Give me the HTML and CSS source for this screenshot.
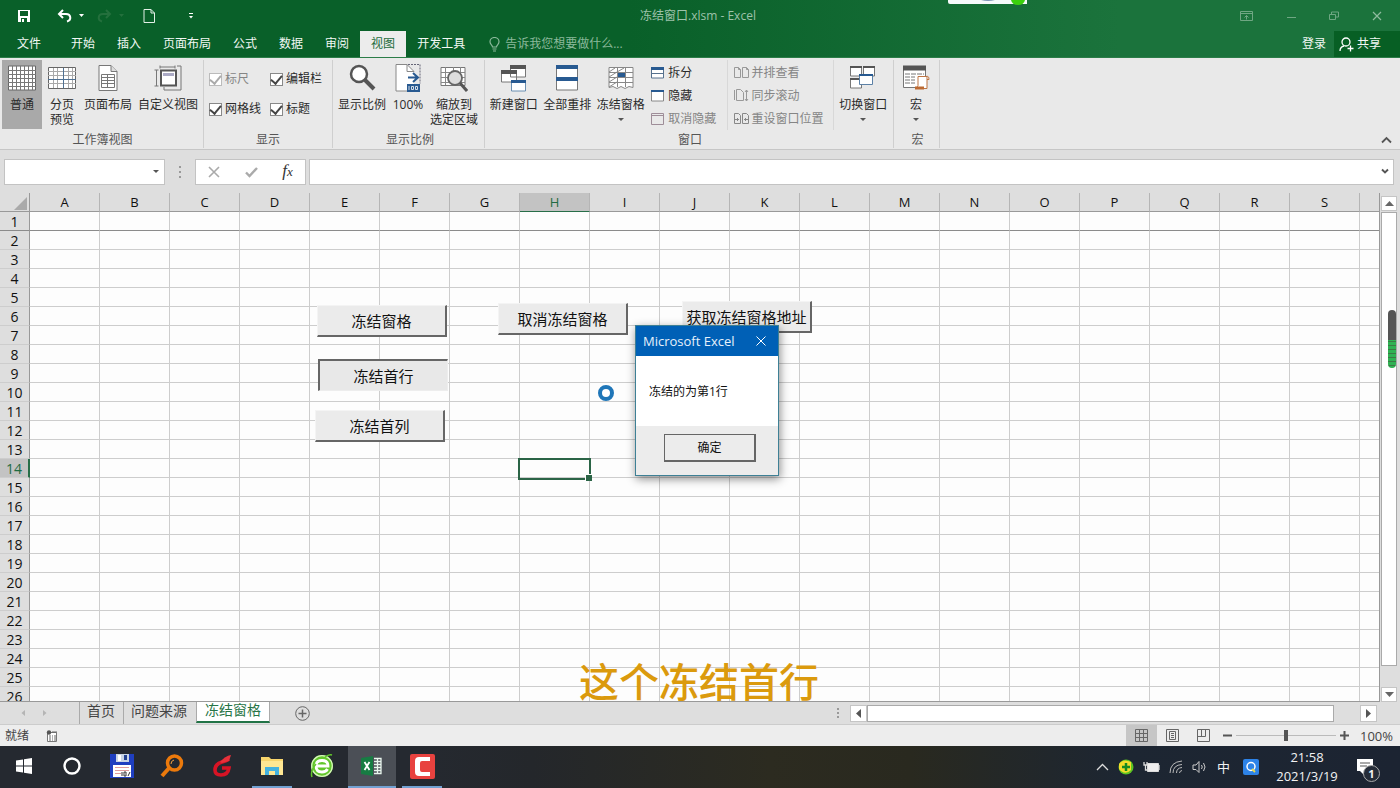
FILE: index.html
```html
<!DOCTYPE html>
<html lang="zh-CN">
<head>
<meta charset="utf-8">
<title>冻结窗口.xlsm - Excel</title>
<link rel="stylesheet" href="styles.css">
</head>
<body>
<div class="app">
  <header class="titlebar">
    <div class="quick">
      <button class="qbtn" aria-label="保存"><svg width="14" height="14" viewBox="0 0 14 14"><path d="M1 1h12v12H1z" fill="#fff"/><path d="M3 2h8v5H3zM4 9h6v4H4z" fill="#0b6029"/><path d="M5 10h2v3H5z" fill="#fff"/></svg></button>
      <button class="qbtn" aria-label="撤消"><svg width="28" height="14" viewBox="0 0 28 14"><path d="M6 1L2 5l4 4M2.500 5H9c5 0 6 6 1 7.500" fill="none" stroke="#fff" stroke-width="2"/><path d="M22 5h5l-2.500 3z" fill="#fff"/></svg></button>
      <button class="qbtn" aria-label="恢复"><svg width="28" height="14" viewBox="0 0 28 14"><path d="M9 1l4 4-4 4M12.500 5H6C1 5 0 11 5 12.500" fill="none" stroke="#24703d" stroke-width="2"/><path d="M22 5h5l-2.500 3z" fill="#24703d"/></svg></button>
      <button class="qbtn" aria-label="新建"><svg width="14" height="14" viewBox="0 0 14 14"><path d="M2 .5h7l3.500 3.500v9.500H2zM9 .5V4h3.500" fill="none" stroke="#e3f0e7"/></svg></button>
      <button class="qbtn" aria-label="自定义快速访问工具栏"><svg width="6" height="8" viewBox="0 0 6 8"><path d="M1 1.500h4" stroke="#fff"/><path d="M1 4h4L3 6.500z" fill="#fff"/></svg></button>
    </div>
    <h1 class="doc-title">冻结窗口.xlsm - Excel</h1>
    <div class="window-buttons">
      <button aria-label="功能区显示选项"><svg width="13" height="12" viewBox="0 0 13 12"><path d="M.5 1.500h12v9H.5zM.5 3.500h12M6.500 9.500V5.500M4.500 7.500l2-2 2 2" fill="none" stroke="#6fa783"/></svg></button>
      <button aria-label="最小化"><svg width="10" height="12" viewBox="0 0 10 12"><path d="M1 7.500h9" stroke="#6fa783"/></svg></button>
      <button aria-label="还原"><svg width="10" height="12" viewBox="0 0 10 12"><path d="M.5 4.500h6v5h-6zM2.500 4.500v-2.500h7v5h-3" fill="none" stroke="#6fa783"/></svg></button>
      <button aria-label="关闭"><svg width="10" height="12" viewBox="0 0 10 12"><path d="M1 2l8 8M9 2l-8 8" stroke="#8fbb9e" stroke-width="1.200"/></svg></button>
    </div>
    <div class="float-bar"><svg width="79" height="5" viewBox="0 0 79 5"><path d="M0 0h79v4H2Q0 4 0 2z" fill="#f6fafb"/><path d="M33 0h14q-7 2-14 0" fill="#7d93b5"/><path d="M63 0h14q-1 5-7 5t-7-5" fill="#3bd00d"/></svg></div>
  </header>

  <nav class="tabs">
    <button class="tab file">文件</button>
    <button class="tab">开始</button>
    <button class="tab">插入</button>
    <button class="tab">页面布局</button>
    <button class="tab">公式</button>
    <button class="tab">数据</button>
    <button class="tab">审阅</button>
    <button class="tab active">视图</button>
    <button class="tab">开发工具</button>
    <label class="tell"><svg width="11" height="15" viewBox="0 0 11 15"><path d="M3.500 10C3.500 8 1 7.500 1 4.800a4.500 4.300 0 0 1 9 0C10 7.500 7.500 8 7.500 10zM3.500 12h4M4 14h3" fill="none" stroke="#8bb99b" stroke-width="1.200"/></svg><input type="text" placeholder="告诉我您想要做什么..." aria-label="告诉我您想要做什么"></label>
    <button class="login">登录</button>
    <button class="share"><svg width="15" height="15" viewBox="0 0 15 15"><circle cx="7" cy="5" r="4" fill="none" stroke="#fff" stroke-width="1.300"/><path d="M1 14c0-3 2-4.500 4-5M8.500 11.500h6M11.500 8.500v6" fill="none" stroke="#fff" stroke-width="1.300"/></svg>共享</button>
  </nav>

  <section class="ribbon">
    <div class="group g-views">
      <div class="tools">
        <button class="big w40 pressed"><svg width="28" height="26" viewBox="0 0 28 26"><path d="M.5 1h27v24H.5z" fill="#fff" stroke="#666"/><path d="M0 5.500h28M0 9.500h28M0 13.500h28M0 17.500h28M0 21.500h28M4.500 1v24M8.500 1v24M12.500 1v24M16.500 1v24M20.500 1v24M24.500 1v24" stroke="#777"/></svg>普通</button>
        <button class="big w40"><svg width="28" height="26" viewBox="0 0 28 26"><path d="M.5 2.500h27v21H.5z" fill="#fff" stroke="#666"/><path d="M0 6.500h28M0 10.500h28M0 18.500h28M5.500 3v20M9.500 3v20M20.500 3v20M24.500 3v20" stroke="#a9a9a9"/><path d="M0 14.500h28M15.500 3v20" stroke="#4e7092"/></svg>分页<br>预览</button>
        <button class="big w52"><svg width="20" height="26" viewBox="0 0 20 26"><path d="M1 .5h12l6 6v19H1z" fill="#fff" stroke="#777"/><path d="M13 .5v6h6" fill="#ddd" stroke="#777"/><path d="M3.500 9.500h13v13h-13zM3.500 12.500h13M3.500 15.500h13M3.500 18.500h13M9.500 9.500v13" fill="none" stroke="#777"/></svg>页面布局</button>
        <button class="big w72"><svg width="28" height="26" viewBox="0 0 28 26"><path d="M6 .5v3M6 2h15M21 .5v3M.5 5h4M2.500 5v16M.5 21h4M23 1h4v24H10v-3" fill="none" stroke="#777"/><path d="M7 5.500h15v15H7z" fill="#fff" stroke="#555" stroke-width="2"/><path d="M9 8h11v3H9z" fill="#aaa9c4"/></svg>自定义视图</button>
      </div>
      <div class="group-name">工作簿视图</div>
    </div>
    <div class="group g-show">
      <div class="checks">
        <label class="dim"><input type="checkbox" checked disabled>标尺</label>
        <label><input type="checkbox" checked>编辑栏</label>
        <label><input type="checkbox" checked>网格线</label>
        <label><input type="checkbox" checked>标题</label>
      </div>
      <div class="group-name">显示</div>
    </div>
    <div class="group g-zoom">
      <div class="tools">
        <button class="big w52"><svg width="28" height="28" viewBox="0 0 28 28"><circle cx="11" cy="10" r="8" fill="#fff" stroke="#555" stroke-width="2.500"/><path d="M17 16l9 9" stroke="#555" stroke-width="4"/></svg>显示比例</button>
        <button class="big w40"><svg width="26" height="28" viewBox="0 0 26 28"><path d="M1 .5h11l7 7V27H1z" fill="#fff"/><path d="M12 27H1V.5h11l7 7h-7v-7" fill="none" stroke="#888"/><path d="M13 .5h12v19" fill="none" stroke="#667" stroke-dasharray="2 1"/><path d="M13 13.500h9M18 9l5 4.500-5 4.500" fill="none" stroke="#285a91" stroke-width="2"/><path d="M12 20h13v8H12z" fill="#285a91"/><path d="M14 22v4M16.500 22.500h2v3h-2zM20.500 22.500h2v3h-2z" fill="none" stroke="#fff" stroke-width=".8"/></svg>100%</button>
        <button class="big w52"><svg width="28" height="28" viewBox="0 0 28 28"><path d="M1 3.500h24v18H1z" fill="#fff" stroke="#777"/><path d="M1 8.500h24M1 13.500h24M1 18.500h24M5.500 3v18M13.500 3v18M20.500 3v18" stroke="#888"/><circle cx="15" cy="14" r="7" fill="#ddd" stroke="#666" stroke-width="1.800"/><path d="M20 19l7 8" stroke="#555" stroke-width="3"/></svg>缩放到<br>选定区域</button>
      </div>
      <div class="group-name">显示比例</div>
    </div>
    <div class="group g-window">
      <div class="tools">
        <button class="big w54"><svg width="28" height="28" viewBox="0 0 28 28"><path d="M10.500 2h15v11h-15zM1.500 7h15v11h-15z" fill="#fff" stroke="#777"/><path d="M10 1h16v4H10zM1 6h16v4H1z" fill="#555"/><path d="M11.500 17h14v10h-14z" fill="#fff" stroke="#6b8fb1"/><path d="M11 16h15v3H11z" fill="#285a91"/></svg>新建窗口</button>
        <button class="big w54"><svg width="24" height="28" viewBox="0 0 24 28"><path d="M1.500 2h21v24h-21z" fill="#fff" stroke="#777"/><path d="M1 1h22v4H1zM1 13h22v4H1z" fill="#285a91"/></svg>全部重排</button>
        <button class="big w54"><svg width="26" height="28" viewBox="0 0 26 28"><path d="M1 3.500h24v20l-4-1-4 2-4-2-4 2-4-2-4 1z" fill="#fff" stroke="#888"/><path d="M1 8.500h24M1 13.500h24M1 18.500h24M9.500 3v20M17.500 3v20M1 8l6-4M9 8l7-4M1 18l8-5M1 23l8-5M1 13l8-5" fill="none" stroke="#888"/><path d="M10 9h7v4h-7z" fill="#285a91"/></svg>冻结窗格<i class="caret"></i></button>
        <div class="stack first">
          <button><svg width="13" height="12" viewBox="0 0 13 12"><path d="M.5 1h12v10H.5zM.5 6.500h12" fill="#fff" stroke="#56718e"/><path d="M0 0h13v3H0z" fill="#285a91"/></svg>拆分</button>
          <button><svg width="13" height="12" viewBox="0 0 13 12"><path d="M.5 1h12v10H.5z" fill="#fff" stroke="#888"/><path d="M0 0h13v2H0z" fill="#285a91"/></svg>隐藏</button>
          <button class="dim"><svg width="13" height="12" viewBox="0 0 13 12"><path d="M.5 .5h12v11H.5zM.5 2.500h12" fill="none" stroke="#9e8d98"/></svg>取消隐藏</button>
        </div>
        <div class="stack second">
          <button class="dim"><svg width="15" height="12" viewBox="0 0 15 12"><path d="M.5 .5h4l2 2v8h-6zM8.500 .5h4l2 2v8h-6zM4.500 .5v2h2M12.500 .5v2h2" fill="none" stroke="#999"/></svg>并排查看</button>
          <button class="dim"><svg width="15" height="13" viewBox="0 0 15 13"><path d="M.5 1v10M2.500 11.500V.5h4l3 3v8zM12.500 1v11M11 3l1.500-2L14 3M11 10l1.500 2 1.500-2" fill="none" stroke="#999"/></svg>同步滚动</button>
          <button class="dim"><svg width="15" height="12" viewBox="0 0 15 12"><path d="M.5 .5h4l2 2v8h-6zM8.500 .5h4l2 2v8h-6zM1 6.500h4M3.500 5v3M10 6.500h4M11.500 5v3" fill="none" stroke="#888"/></svg>重设窗口位置</button>
        </div>
        <button class="big w60"><svg width="28" height="26" viewBox="0 0 28 26"><path d="M1.500 2h11v9h-11zM14.500 2h11v9h-11zM1.500 14h11v9h-11z" fill="#fff" stroke="#777"/><path d="M1 1h12v2H1zM14 1h12v2H14zM1 13h12v2H1z" fill="#555"/><path d="M10.500 9.500h13v10h-13z" fill="#fff" stroke="#5c81a6"/><path d="M10 9h14v2H10z" fill="#285a91"/></svg>切换窗口<i class="caret"></i></button>
      </div>
      <div class="group-name">窗口</div>
    </div>
    <div class="group g-macro">
      <div class="tools">
        <button class="big w40"><svg width="28" height="27" viewBox="0 0 28 27"><path d="M1.500 2h22v21h-22z" fill="#fff" stroke="#777"/><path d="M1 1h23v5H1z" fill="#555"/><path d="M3 9.500h19M3 12.500h10M3 15.500h10M3 18.500h10" stroke="#777" stroke-dasharray="5 1"/><path d="M16 12h9v12H14l2-3zM24 12q3-1 3 3h-2" fill="#fff" stroke="#bd7544"/><path d="M13 22h9v3h-9z" fill="#bd6a32"/></svg>宏<i class="caret"></i></button>
      </div>
      <div class="group-name">宏</div>
    </div>
    <button class="collapse" aria-label="折叠功能区"><svg width="11" height="8" viewBox="0 0 11 8"><path d="M1 6.500l4.500-4.500L10 6.500" fill="none" stroke="#555" stroke-width="1.800"/></svg></button>
  </section>

  <section class="formula">
    <div class="namebox"><input type="text" aria-label="名称框"><i class="caret"></i></div>
    <svg class="dots" width="4" height="14" viewBox="0 0 4 14"><path d="M1 1h2v2H1zM1 6h2v2H1zM1 11h2v2H1z" fill="#999"/></svg>
    <div class="fx">
      <button aria-label="取消"><svg width="12" height="12" viewBox="0 0 12 12"><path d="M1 1l10 10M11 1L1 11" stroke="#aaa" stroke-width="1.600"/></svg></button>
      <button aria-label="输入"><svg width="13" height="12" viewBox="0 0 13 12"><path d="M1 6.500L4.500 10 12 2" fill="none" stroke="#aaa" stroke-width="2.400"/></svg></button>
      <button class="fx-btn" aria-label="插入函数">f<small>x</small></button>
    </div>
    <div class="bar"><input type="text" aria-label="编辑栏"><svg width="8" height="7" viewBox="0 0 8 7"><path d="M1 1.500L4 4.500l3-3" fill="none" stroke="#555" stroke-width="1.900"/></svg></div>
  </section>

  <main class="sheet">
    <div class="grid">
      <table>
        <thead><tr id="cols"><th class="corner"><svg width="13" height="13" viewBox="0 0 13 13"><path d="M13 0v13H0z" fill="#aaa"/></svg></th></tr></thead>
        <tbody id="rows"></tbody>
      </table>
      <div class="cell-cursor"></div>
      <button class="form-btn f1">冻结窗格</button>
      <button class="form-btn f2">取消冻结窗格</button>
      <button class="form-btn f3">获取冻结窗格地址</button>
      <button class="form-btn f4 down">冻结首行</button>
      <button class="form-btn f5">冻结首列</button>
      <div class="busy"></div>
    </div>
    <div class="vscroll">
      <button aria-label="向上滚动"><svg width="9" height="5" viewBox="0 0 9 5"><path d="M0 5h9L4.500 0z" fill="#666"/></svg></button>
      <div class="vthumb"></div>
      <button aria-label="向下滚动"><svg width="9" height="5" viewBox="0 0 9 5"><path d="M0 0h9L4.500 5z" fill="#666"/></svg></button>
      <div class="meter"></div>
    </div>
    <div class="dialog" role="dialog" aria-label="Microsoft Excel">
      <div class="dlg-title"><span>Microsoft Excel</span><button aria-label="关闭"><svg width="10" height="10" viewBox="0 0 10 10"><path d="M.5 .5l9 9M9.500 .5l-9 9" stroke="#fff"/></svg></button></div>
      <p>冻结的为第1行</p>
      <div class="dlg-foot"><button>确定</button></div>
    </div>
  </main>
  <div class="subtitle">这个冻结首行</div>

  <div class="sheet-tabs">
    <div class="nav-arrows"><svg width="28" height="8" viewBox="0 0 28 8"><path d="M5 1v6L1.500 4zM23 1v6l3.500-3z" fill="#b5b5b5"/></svg></div>
    <button class="stab">首页</button>
    <button class="stab">问题来源</button>
    <button class="stab active">冻结窗格</button>
    <button class="add" aria-label="新工作表"><svg width="15" height="15" viewBox="0 0 15 15"><circle cx="7.500" cy="7.500" r="6.800" fill="none" stroke="#666"/><path d="M3.500 7.500h8M7.500 3.500v8" stroke="#666" stroke-width="1.500"/></svg></button>
    <svg class="dots tab-dots" width="4" height="12" viewBox="0 0 4 12"><path d="M1 1h2v2H1zM1 5h2v2H1zM1 9h2v2H1z" fill="#999"/></svg>
    <div class="hscroll">
      <button aria-label="向左滚动"><svg width="5" height="9" viewBox="0 0 5 9"><path d="M5 0v9L0 4.500z" fill="#555"/></svg></button>
      <div class="hthumb"></div>
      <button aria-label="向右滚动"><svg width="5" height="9" viewBox="0 0 5 9"><path d="M0 0v9l5-4.500z" fill="#555"/></svg></button>
    </div>
  </div>

  <footer class="status">
    <span class="ready">就绪</span>
    <svg width="12" height="12" viewBox="0 0 12 12"><path d="M1.500 2.500h9v9h-9z" fill="#fff" stroke="#777"/><circle cx="3" cy="2.500" r="2.200" fill="#555"/><path d="M6 2h5M3 6h2M6 6h1M8 6h2M3 8h2M6 8h1M8 8h2M3 10h2M6 10h1M8 10h2" stroke="#666"/></svg>
    <div class="status-right">
      <button class="view on" aria-label="普通"><svg width="13" height="13" viewBox="0 0 13 13"><path d="M.5 .5h12v12H.5zM.5 4.500h12M.5 8.500h12M4.500 .5v12M8.500 .5v12" fill="none" stroke="#666"/></svg></button>
      <button class="view" aria-label="页面布局"><svg width="13" height="13" viewBox="0 0 13 13"><path d="M.5 .5h12v12H.5zM3.500 2.500h6v8h-6zM5 4.500h3M5 6.500h3M5 8.500h3" fill="none" stroke="#666"/></svg></button>
      <button class="view" aria-label="分页预览"><svg width="13" height="13" viewBox="0 0 13 13"><path d="M.5 .5h12v12H.5zM4.500 .5v7M8.500 .5v7h-8" fill="none" stroke="#666"/></svg></button>
      <button class="zoom" aria-label="缩小"><svg width="9" height="9" viewBox="0 0 9 9"><path d="M0 4.500h9" stroke="#555" stroke-width="2"/></svg></button>
      <input type="range" min="0" max="100" value="50" aria-label="显示比例">
      <button class="zoom" aria-label="放大"><svg width="9" height="9" viewBox="0 0 9 9"><path d="M0 4.500h9M4.500 0v9" stroke="#555" stroke-width="2"/></svg></button>
      <span class="percent">100%</span>
    </div>
  </footer>

  <footer class="taskbar">
    <button class="task" aria-label="开始"><svg width="16" height="16" viewBox="0 0 16 16"><path d="M0 2.500l7-1v6H0zM8 1.300L16 0v7.500H8zM0 8.500h7v6l-7-1zM8 8.500h8V16l-8-1.300z" fill="#fff"/></svg></button>
    <button class="task" aria-label="搜索"><svg width="18" height="18" viewBox="0 0 18 18"><circle cx="9" cy="9" r="7.500" fill="none" stroke="#fff" stroke-width="2.400"/></svg></button>
    <button class="task" aria-label="磁盘工具"><svg width="24" height="24" viewBox="0 0 24 24"><path d="M0 0h24v24H0z" fill="#1f3fc0"/><path d="M6 0h13v8H6z" fill="#c9d4e4"/><path d="M8 1h3v6H8z" fill="#fff"/><path d="M14 1h3v5h-3z" fill="#23418f"/><path d="M3 11h18v12H3z" fill="#fff"/><path d="M5 13.500h14M5 16.500h14" stroke="#e09c9c"/><path d="M5 19.500h6" stroke="#e09c9c"/><path d="M12 18v4M14 18h2v4h-2zM18 22l2-4" fill="none" stroke="#333"/></svg></button>
    <button class="task" aria-label="查找"><svg width="24" height="24" viewBox="0 0 24 24"><circle cx="14.500" cy="9" r="7" fill="none" stroke="#ec7a0c" stroke-width="3.500"/><path d="M10 13l-8 9" stroke="#ec7a0c" stroke-width="4"/><path d="M11 10a4 4 0 0 1 3-4" fill="none" stroke="#f9a342"/></svg></button>
    <button class="task" aria-label="浏览工具"><svg width="22" height="24" viewBox="0 0 22 24"><path d="M18 5q-3 2-7 3-7 2-7 8 0 5 6 5 7 0 8-7h-7" fill="none" stroke="#d71425" stroke-width="3.600"/><path d="M20 1l-2 6-7 2-2-1q5-6 11-7z" fill="#e8303a"/></svg></button>
    <button class="task run" aria-label="文件资源管理器"><svg width="24" height="22" viewBox="0 0 24 22"><path d="M1 2h8l2 2h12v16H1z" fill="#f8d56c"/><path d="M1 6h22v14H1z" fill="#ffe793"/><path d="M5 20v-8h14v8h-4v-4H9v4z" fill="#45b2df"/></svg></button>
    <button class="task" aria-label="浏览器"><svg width="24" height="24" viewBox="0 0 24 24"><circle cx="12" cy="12" r="11" fill="#62c72b"/><circle cx="12" cy="12" r="10.300" fill="none" stroke="#d7f4bd" stroke-width="1.300"/><path d="M6 12h12q0-5.500-6-5.500T6 12q0 6 6 6 4 0 5.500-3" fill="none" stroke="#fff" stroke-width="2.800"/><path d="M2 23q-2-6 4-13M15 3q4-3 7-2" fill="none" stroke="#62c72b" stroke-width="1.500"/></svg></button>
    <button class="task run current" aria-label="Excel"><svg width="22" height="20" viewBox="0 0 22 20"><path d="M0 2l12-2v20L0 18z" fill="#177c43"/><path d="M3.500 6l5 8M8.500 6l-5 8" stroke="#fff" stroke-width="1.800"/><path d="M13 2.500h7v15h-7M13 5.500h7M13 8.500h7M13 11.500h7M13 14.500h7M16.500 2v16" fill="none" stroke="#e9f6ee" stroke-width="1.300"/></svg></button>
    <button class="task run" aria-label="Camtasia"><svg width="25" height="25" viewBox="0 0 25 25"><rect width="25" height="25" rx="2" fill="#e8423f"/><path d="M5 7q0-4 4-4h11v4h-8q-2 0-2 2v7q0 2 2 2h8v4H9q-4 0-4-4z" fill="#fff"/></svg></button>
    <div class="tray">
      <svg width="13" height="8" viewBox="0 0 13 8"><path d="M1 7l5.500-5.500L12 7" fill="none" stroke="#ddd" stroke-width="1.300"/></svg>
      <svg width="16" height="16" viewBox="0 0 16 16"><circle cx="8" cy="8" r="7.500" fill="#5cc423"/><path d="M1 5q4-6 12-2v8q-6 6-12-1z" fill="#f3dd2a"/><path d="M4 8h8M8 4v8" stroke="#168b21" stroke-width="2.500"/></svg>
      <svg width="17" height="12" viewBox="0 0 17 12"><path d="M4.500 2.500h11v8h-11z" fill="#eee" stroke="#ddd"/><path d="M1 1v3h3V1M2.500 4v5h3M16 4v5" fill="none" stroke="#ddd" stroke-width="1.300"/></svg>
      <svg width="14" height="14" viewBox="0 0 14 14"><path d="M1 13Q1 2 13 1M4 13q0-8 9-8.500M7.500 13q0-5 5.500-5.500M10.500 13q0-2 2.500-2.500" fill="none" stroke="#bbb"/></svg>
      <svg width="15" height="14" viewBox="0 0 15 14"><path d="M1 5h3l3-3.500v11L4 9.500H1zM9.500 5q1.500 2 0 4M11.500 3q3 4 0 8" fill="none" stroke="#ccc"/></svg>
      <span class="ime">中</span>
      <svg width="16" height="16" viewBox="0 0 16 16"><rect width="16" height="16" rx="2" fill="#2d83e8"/><circle cx="8" cy="7.500" r="4" fill="none" stroke="#fff" stroke-width="1.500"/><path d="M9 10l3 3" stroke="#e7d94e" stroke-width="1.800"/></svg>
    </div>
    <time class="clock">21:58<br>2021/3/19</time>
    <button class="notice" aria-label="1 条通知"><svg width="18" height="18" viewBox="0 0 18 18"><path d="M1 1h16v12H8v4l-4-4H1z" fill="#fff"/><path d="M4 5h10M4 8h7" stroke="#555"/></svg><b>1</b></button>
  </footer>
</div>
<script src="script.js"></script>
</body>
</html>
```
FILE: script.js
```js
const letters = [...'ABCDEFGHIJKLMNOPQRS', ''];
const head = document.getElementById('cols');
letters.forEach((letter) => {
  const th = document.createElement('th');
  th.textContent = letter;
  if (letter === 'H') th.className = 'selected';
  head.append(th);
});
const body = document.getElementById('rows');
for (let n = 1; n <= 26; n += 1) {
  const row = body.insertRow();
  const th = document.createElement('th');
  th.textContent = n;
  if (n === 14) th.className = 'selected';
  if (n === 1) row.className = 'frozen';
  row.append(th);
  letters.forEach(() => row.insertCell());
}
```
FILE: styles.css
```css
* { box-sizing: border-box; }
body {
  margin: 0;
  font: 12px/16px "Open Sans", "Noto Sans CJK SC", sans-serif;
  color: #2b2b2b;
}
button, input { font: inherit; color: inherit; }
button { border: 0; padding: 0; background: none; white-space: nowrap; }
svg { display: block; flex: none; }
.app { position: relative; display: flex; flex-direction: column; height: 100vh; overflow: hidden; background: #e0e0e0; }

/* title bar */
.titlebar {
  position: relative; display: flex; align-items: center; justify-content: space-between;
  height: 31px; padding: 0 18px 0 17px;
  background: linear-gradient(90deg, #096029 45%, #1b733c 80%);
}
.quick { display: flex; align-items: center; }
.qbtn { display: flex; margin-right: 26px; }
.qbtn:nth-child(2) { margin-right: 12px; }
.qbtn:nth-child(3) { margin-right: 17px; }
.qbtn:nth-child(4) { margin-right: 32px; }
.doc-title { position: absolute; left: 0; right: 4px; margin: 0; text-align: center; font-size: 12px; font-weight: 400; color: #9dc2aa; }
.window-buttons { display: flex; gap: 33px; }
.float-bar { position: absolute; top: 0; left: 948px; }

/* ribbon tabs */
.tabs { display: flex; height: 27px; color: #f2f8f4; background: linear-gradient(90deg, #096029 45%, #1b733c 80%); border-bottom: 1px solid #2c7d48; }
.tab { padding: 0 11px; }
.tab.file { padding: 0 19px 0 17px; }
.tab.active { background: #ececec; color: #1b6b3a; }
.tell { display: flex; align-items: center; gap: 5px; margin-left: 13px; }
.tell input { width: 180px; border: 0; padding: 0; background: none; outline: 0; }
.tell input::placeholder { color: #8bb99b; opacity: 1; }
.login { margin-left: auto; padding: 0 8px; }
.share { display: flex; align-items: center; gap: 3px; padding: 0 19px 0 5px; background: #075f24; }

/* ribbon */
.ribbon { display: flex; height: 92px; background: #e9e9e9; border-bottom: 1px solid #c6c6c6; padding: 2px 8px 1px 0; }
.group { display: flex; flex-direction: column; justify-content: space-between; border-right: 1px solid #cfcfcf; }
.group-name { text-align: center; color: #555; }
.tools { display: flex; height: 70px; }
.g-views { width: 204px; padding-left: 2px; }
.g-show { width: 129px; }
.g-zoom { width: 152px; padding-left: 3px; }
.g-window { width: 409px; padding-left: 2px; }
.g-macro { width: 46px; padding-left: 2px; }
.big { display: flex; flex-direction: column; align-items: center; line-height: 15px; padding-top: 4px; }
.big svg { height: 28px; margin-bottom: 5px; }
.w40 { width: 40px; }
.w52 { width: 52px; }
.w54 { width: 54px; }
.w60 { width: 60px; }
.w72 { width: 68px; }
.pressed { background: #a9a9a9; height: 69px; }
.caret { border: 3px solid transparent; border-top-color: #555; border-bottom: 0; margin-top: 6px; }
.checks { display: grid; grid-template-columns: 61px 1fr; grid-auto-rows: 30px; padding: 4px 0 0 5px; }
.checks label { display: flex; align-items: center; gap: 3px; white-space: nowrap; }
.checks input { appearance: none; display: flex; justify-content: center; width: 13px; height: 13px; margin: 0; border: 1px solid #888; background: #fff; }
.checks input::after { content: ""; width: 5px; height: 9px; margin-top: -1px; border: solid #444; border-width: 0 2px 2px 0; transform: rotate(40deg); }
.checks .dim input { border-color: #bbb; }
.checks .dim input::after { border-color: #aaa; }
.dim { color: #858585; }
.stack { display: flex; flex-direction: column; padding-top: 1px; }
.stack button { display: flex; align-items: center; gap: 4px; height: 23px; }
.first { width: 80px; padding-left: 4px; }
.second { width: 108px; padding-left: 6px; border-left: 1px solid #d8d8d8; border-right: 1px solid #d8d8d8; }
.second button { gap: 3px; }
.collapse { margin-left: auto; align-self: flex-end; padding-bottom: 4px; }

/* formula bar */
.formula { display: flex; align-items: center; height: 43px; padding: 0 6px 0 4px; background: #dedede; }
.namebox, .fx, .bar { display: flex; align-items: center; height: 26px; background: #fff; border: 1px solid #c3c3c3; }
.namebox { width: 161px; padding-right: 5px; }
.namebox input, .bar input { flex: 1; min-width: 0; border: 0; padding: 0 4px; outline: 0; background: none; }
.namebox .caret { margin: 0; }
.dots { margin: 0 13px; }
.fx { width: 111px; justify-content: space-around; }
.fx-btn { font: italic 17px/20px "Liberation Serif", serif; color: #333; }
.fx-btn small { font-size: 13px; }
.bar { flex: 1; margin-left: 3px; padding-right: 4px; }

/* worksheet */
.sheet { position: relative; display: flex; flex: 1; min-height: 0; background: #dedede; }
.grid { position: relative; flex: 1; overflow: hidden; border-bottom: 1px solid #999; border-right: 1px solid #999; }
table { width: 1430px; table-layout: fixed; border-collapse: separate; border-spacing: 0; background: #fdfdfd; }
tr { height: 19px; }
th, td { height: 19px; padding: 0; width: 70px; border: solid #cdcdcd; border-width: 0 1px 1px 0; }
th { font: 14px/17px "Open Sans", sans-serif; color: #111; background: #dedede; }
thead th { border-right-color: #b5b5b5; border-bottom-color: #999; font-size: 13px; }
tbody th, .corner { width: 30px; border-right-color: #999; }
.corner svg { margin: 3px 0 0 14px; }
.frozen td, .frozen th { border-bottom-color: #8b8b8b; }
th.selected { color: #1f6b42; background: #c3c3c3; }
thead .selected { border-bottom-color: #276e48; }
tbody .selected { border-right: 2px solid #276e48; }
.cell-cursor { position: absolute; left: 518px; top: 265px; width: 73px; height: 22px; border: 2px solid #2b6446; }
.cell-cursor::after { content: ""; position: absolute; right: -3px; bottom: -3px; width: 6px; height: 6px; background: #2b6446; border: solid #fff; border-width: 1px 0 0 1px; }
.form-btn { position: absolute; width: 130px; height: 32px; font-size: 15px; line-height: 30px; color: #111; background: #ebebeb; border: 1px solid #f4f4f4; border-right: 2px solid #666; border-bottom: 2px solid #666; }
.form-btn.down { border: 1px solid #ededed; border-left: 2px solid #666; border-top: 2px solid #666; background: #e8e8e8; }
.f1 { left: 317px; top: 112px; }
.f2 { left: 498px; top: 110px; }
.f3 { left: 682px; top: 108px; }
.f4 { left: 318px; top: 166px; }
.f5 { left: 315px; top: 217px; }
.busy { position: absolute; left: 598px; top: 192px; width: 16px; height: 16px; border: 4px solid #1f76b8; border-radius: 50%; background: #fff; }

.vscroll { position: relative; display: flex; flex-direction: column; width: 20px; padding: 3px 3px 0 1px; }
.vscroll button { display: grid; place-items: center; height: 15px; background: #fff; border: 1px solid #c5c5c5; }
.vthumb { flex: 1; margin: 1px 0 21px; background: #fff; border: 1px solid #aaa; }
.meter { position: absolute; left: 8px; top: 117px; width: 8px; height: 58px; border-radius: 4px; background: linear-gradient(#555 52%, transparent 52%), repeating-linear-gradient(#2fb253 0 3px, #3b7a45 3px 4px); }

/* message box */
.dialog { position: absolute; left: 635px; top: 132px; width: 144px; background: #fff; border: 1px solid #3e8095; box-shadow: 1px 3px 9px rgba(0, 0, 0, .45); color: #111; }
.dlg-title { display: flex; align-items: center; justify-content: space-between; height: 30px; padding: 0 12px 0 7px; font-size: 13px; color: #e6f1fb; background: #0060b6; }
.dialog p { margin: 0; padding: 28px 13px 26px; }
.dlg-foot { display: flex; justify-content: flex-end; padding: 8px 22px 13px; background: #ececec; }
.dlg-foot button { width: 92px; height: 28px; border: 1px solid #666; border-width: 1px 2px 2px 1px; }
.subtitle { position: absolute; left: 0; right: 2px; bottom: 78px; text-align: center; font: 500 40px/60px "Noto Sans CJK SC", sans-serif; color: #db9a0d; }

/* sheet tabs */
.sheet-tabs { display: flex; height: 22px; align-items: stretch; background: #dedede; }
.nav-arrows { display: flex; align-items: center; width: 79px; padding-left: 20px; }
.stab { font-size: 14px; line-height: 16px; padding: 0 8px 5px 7px; color: #444; border-left: 1px solid #aaa; }
.stab:nth-child(3) { padding-right: 9px; }
.stab.active { padding: 0 8px 3px; height: 21px; color: #277446; background: #fff; border-left: 1px solid #aaa; border-right: 1px solid #aaa; border-bottom: 2px solid #217346; }
.add { margin-left: 25px; }
.tab-dots { margin: auto 10px auto auto; }
.hscroll { display: flex; width: 527px; margin: 3px 23px 2px 0; }
.hscroll button { display: grid; place-items: center; width: 17px; background: #fff; border: 1px solid #c5c5c5; }
.hthumb { flex: 1; margin-right: 26px; background: #fff; border: 1px solid #aaa; }

/* status bar */
.status { display: flex; align-items: center; height: 22px; padding: 0 7px 0 5px; background: #ededed; border-top: 1px solid #ccc; color: #444; }
.ready { width: 41px; }
.status-right { display: flex; align-items: center; align-self: stretch; margin-left: auto; }
.view { display: grid; place-items: center; width: 31px; align-self: stretch; }
.view.on { background: #c6c6c6; }
.zoom { margin: 0 2px; }
.view + .zoom { margin-left: 4px; }
.status input { appearance: none; width: 100px; height: 12px; margin: 0 2px; background: linear-gradient(#bbb, #bbb) center / 100% 1px no-repeat; }
.status input::-webkit-slider-thumb { appearance: none; width: 4px; height: 11px; background: #555; }
.percent { font-size: 13px; margin-left: 9px; }

/* taskbar */
.taskbar { display: flex; height: 42px; background: linear-gradient(90deg, #252930 0 30%, #24272b 38%, #2c2b20 55%, #29291f 65%, #1d2632 80%, #1c2432); color: #f2f2f2; }
.task { display: grid; place-items: center; width: 50px; margin: 0; border-bottom: 2px solid transparent; }
.task:nth-child(1) { width: 47px; }
.task.run { width: 40px; border-color: #72a1d2; margin: 0 5px; }
.task.current { width: 48px; margin: 0 1px; background: #4b4f56; }
.tray { display: flex; align-items: center; gap: 9px; margin-left: auto; }
.ime { margin: 0 4px 0 1px; font-size: 13px; }
.clock { width: 96px; text-align: center; font-size: 13px; line-height: 19px; padding-top: 2px; }
.notice { position: relative; display: flex; align-items: center; width: 45px; padding-left: 1px; }
.notice b { position: absolute; left: 8px; top: 19px; width: 17px; height: 17px; border: 1px solid #aaa; border-radius: 50%; background: #252c38; font-size: 11px; line-height: 15px; }
```
